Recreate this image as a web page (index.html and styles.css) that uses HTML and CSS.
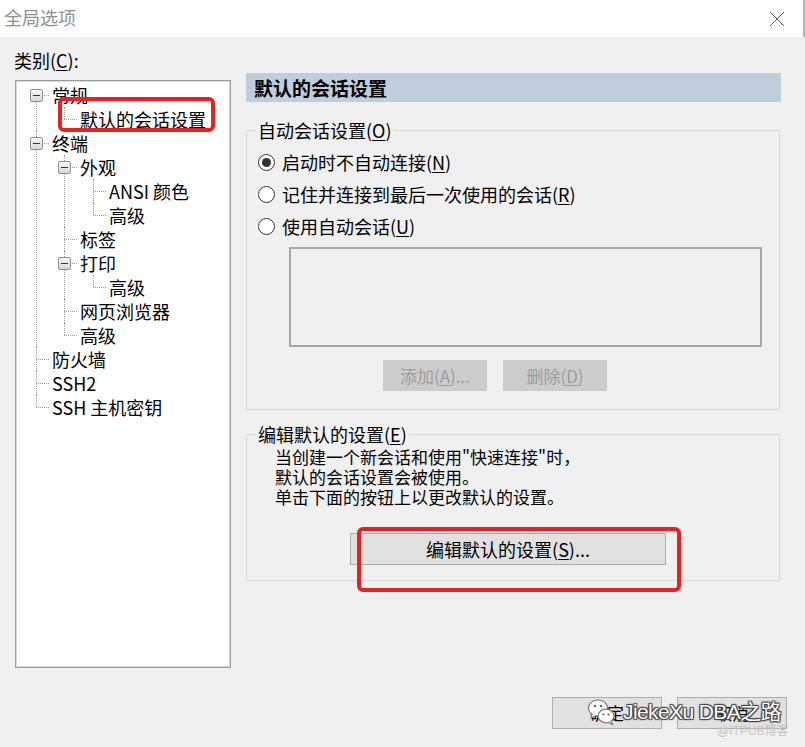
FILE: index.html
```html
<!DOCTYPE html>
<html lang="zh-CN">
<head>
<meta charset="utf-8">
<title>全局选项</title>
<link rel="stylesheet" href="styles.css">
</head>
<body>
<div class="window">
  <div class="titlebar">
    <span class="title">全局选项</span>
    <svg class="close" width="16" height="16" viewBox="0 0 16 16"><path d="M1 1 L15 15 M15 1 L1 15" stroke="#555" stroke-width="1" fill="none"/></svg>
  </div>
  <div class="content">
    <div class="left">
      <div class="cat-label">类别(<u>C</u>):</div>
      <div class="tree">
        <ul class="tree-root">
          <li><span class="exp"></span><div class="row">常规</div>
            <ul>
              <li><div class="row">默认的会话设置</div></li>
            </ul>
          </li>
          <li><span class="exp"></span><div class="row">终端</div>
            <ul>
              <li><span class="exp"></span><div class="row">外观</div>
                <ul>
                  <li><div class="row">ANSI 颜色</div></li>
                  <li><div class="row">高级</div></li>
                </ul>
              </li>
              <li><div class="row">标签</div></li>
              <li><span class="exp"></span><div class="row">打印</div>
                <ul>
                  <li><div class="row">高级</div></li>
                </ul>
              </li>
              <li><div class="row">网页浏览器</div></li>
              <li><div class="row">高级</div></li>
            </ul>
          </li>
          <li><div class="row">防火墙</div></li>
          <li><div class="row">SSH2</div></li>
          <li><div class="row">SSH 主机密钥</div></li>
        </ul>
        <span class="mark mark-tree"></span>
      </div>
    </div>
    <div class="right">
      <div class="header">默认的会话设置</div>
      <fieldset class="group group-auto">
        <legend>自动会话设置(<u>O</u>)</legend>
        <div class="radio-row"><span class="radio checked"></span><span>启动时不自动连接(<u>N</u>)</span></div>
        <div class="radio-row"><span class="radio"></span><span>记住并连接到最后一次使用的会话(<u>R</u>)</span></div>
        <div class="radio-row"><span class="radio"></span><span>使用自动会话(<u>U</u>)</span></div>
        <div class="listbox"></div>
        <div class="btn-row">
          <button class="btn disabled">添加(<u>A</u>)...</button>
          <button class="btn disabled">删除(<u>D</u>)</button>
        </div>
      </fieldset>
      <fieldset class="group group-edit">
        <legend>编辑默认的设置(<u>E</u>)</legend>
        <div class="desc">
          <div class="desc-line">当创建一个新会话和使用"快速连接"时，</div>
          <div class="desc-line">默认的会话设置会被使用。</div>
          <div class="desc-line">单击下面的按钮上以更改默认的设置。</div>
        </div>
        <button class="btn edit-btn">编辑默认的设置(<u>S</u>)...</button>
      </fieldset>
      <span class="mark mark-edit"></span>
    </div>
  </div>
  <div class="footer">
    <button class="btn footer-btn">确定</button>
    <button class="btn footer-btn">取消</button>
    <div class="watermark">
      <svg class="wm-icon" width="30" height="30" viewBox="0 0 30 30">
        <ellipse cx="11" cy="11" rx="9.5" ry="8" fill="#fff" stroke="#777" stroke-width="1.2"/>
        <path d="M5 17 L4 21 L9 18.5" fill="#fff" stroke="#777" stroke-width="1.2"/>
        <circle cx="8" cy="9" r="1.3" fill="#666"/>
        <circle cx="14" cy="9" r="1.3" fill="#666"/>
        <ellipse cx="19" cy="19" rx="8" ry="6.8" fill="#fff" stroke="#777" stroke-width="1.2"/>
        <path d="M24 24 L25.5 27.5 L21 25.3" fill="#fff" stroke="#777" stroke-width="1.2"/>
        <circle cx="16.5" cy="17.5" r="1.1" fill="#666"/>
        <circle cx="21.5" cy="17.5" r="1.1" fill="#666"/>
      </svg>
      <span class="wm-text">JiekeXu DBA之路</span>
      <span class="wm-sub">@ITPUB博客</span>
    </div>
  </div>
</div>
</body>
</html>
```

FILE: styles.css
```css
* { box-sizing: border-box; }
html, body { margin: 0; padding: 0; }
body {
  width: 805px;
  height: 747px;
  overflow: hidden;
  background: #f0f0f0;
  font-family: "Noto Sans CJK SC", "Noto Sans", sans-serif;
  font-size: 18px;
  color: #000;
}
u { text-decoration: underline; text-underline-offset: 2px; }

.window { width: 805px; height: 747px; display: flex; flex-direction: column; }

.titlebar {
  height: 37px;
  background: #fff;
  display: flex;
  align-items: center;
  justify-content: space-between;
  padding: 0 18px 3px 4px;
  border-right: 2px solid #b5b5b5;
}
.title { color: #8f8f8f; font-size: 18px; line-height: 24px; }
.close { display: block; margin-top: 3px; }

.content { display: flex; padding: 11px 0 0 14px; }

.left { width: 217px; }
.cat-label { line-height: 24px; height: 24px; font-size: 18px; }
.tree {
  position: relative;
  margin: 8px 0 0 1px;
  width: 216px;
  height: 588px;
  background: #fff;
  border: 1px solid #9c9c9c;
  box-shadow: inset 0 0 0 1px #d8d8d8;
  padding-top: 2px;
}
.tree ul { list-style: none; margin: 0; padding: 0; }
.tree ul ul { margin-left: -8px; }
.tree ul ul ul { margin-left: -7px; }
.tree li { position: relative; padding-left: 36px; }
.tree .row { height: 24px; line-height: 24px; font-size: 18px; white-space: nowrap; }
.tree li::before {
  content: "";
  position: absolute;
  left: 20px;
  top: 12px;
  width: 13px;
  border-top: 1px dotted #9a9a9a;
}
.tree li::after {
  content: "";
  position: absolute;
  left: 20px;
  top: 0;
  bottom: 0;
  border-left: 1px dotted #9a9a9a;
}
.tree-root > li:first-child::after { top: 12px; }
.tree li:last-child::after { bottom: auto; height: 12px; }
.tree .exp {
  position: absolute;
  left: 14px;
  top: 6px;
  width: 13px;
  height: 13px;
  border: 1px solid #8e8f8f;
  border-radius: 2px;
  background: linear-gradient(#f7f7f7, #d9d9d9);
  z-index: 1;
}
.tree .exp::after {
  content: "";
  position: absolute;
  left: 2px;
  right: 2px;
  top: 5px;
  height: 1px;
  background: #1e3287;
}

.mark {
  position: absolute;
  border: 4px solid #ea2020;
  border-radius: 6px;
  z-index: 2;
}
.mark-tree { left: 42px; top: 16px; width: 157px; height: 35px; }

.right { position: relative; width: 535px; margin-left: 15px; padding-top: 25px; }
.header {
  height: 29px;
  background: #bfcddc;
  font-weight: bold;
  font-size: 19px;
  line-height: 29px;
  padding-left: 8px;
}
.group {
  margin: 0 1px 0 0;
  padding: 0;
  border: 1px solid #d9d9d9;
  min-width: 0;
}
.group legend {
  margin-left: 9px;
  padding: 0 2px;
  font-size: 18px;
  line-height: 24px;
}
.group-auto { margin-top: 16px; padding-bottom: 18px; }
.radio-row {
  display: flex;
  align-items: center;
  height: 24px;
  margin: 8px 0 0 11px;
  gap: 7px;
  font-size: 18px;
  line-height: 24px;
}
.radio {
  width: 17px;
  height: 17px;
  border: 1px solid #333;
  border-radius: 50%;
  background: #fff;
  display: flex;
  align-items: center;
  justify-content: center;
  flex: none;
}
.radio.checked::after {
  content: "";
  width: 9px;
  height: 9px;
  border-radius: 50%;
  background: #333;
}
.listbox {
  margin: 9px 0 0 42px;
  width: 473px;
  height: 100px;
  border: 2px solid #a6a6a6;
  background: #f0f0f0;
}
.btn-row { display: flex; gap: 16px; margin: 13px 0 0 136px; }
.btn {
  font-family: inherit;
  font-size: 17px;
  line-height: 22px;
  padding: 0;
  color: #000;
  background: #e1e1e1;
  border: 1px solid #adadad;
}
.btn.disabled {
  width: 104px;
  height: 31px;
  background: #cccccc;
  border-color: #cccccc;
  color: #9d9d9d;
}
.group-edit { margin-top: 12px; padding-bottom: 15px; }
.desc {
  margin: 1px 0 0 28px;
  font-size: 17px;
}
.desc-line { height: 20px; line-height: 20px; white-space: nowrap; }
.edit-btn {
  display: block;
  margin: 26px 0 0 103px;
  width: 316px;
  height: 32px;
  font-size: 18px;
}
.mark-edit { left: 111px; top: 479px; width: 324px; height: 65px; }

.footer {
  position: relative;
  margin-top: 29px;
  display: flex;
  justify-content: flex-end;
  gap: 15px;
  padding-right: 18px;
}
.footer-btn { width: 110px; height: 32px; font-size: 17px; }
.watermark { position: absolute; left: 586px; top: 0; width: 219px; height: 50px; pointer-events: none; }
.wm-icon { position: absolute; left: 1px; top: 0; }
.wm-text {
  position: absolute;
  left: 37px;
  top: 1px;
  font-family: "Liberation Sans", "Noto Sans CJK SC", sans-serif;
  font-size: 21px;
  letter-spacing: -0.6px;
  line-height: 28px;
  color: #fff;
  white-space: nowrap;
  text-shadow: 0 0 1px #333, 1px 1px 1px #444, -1px -1px 1px #444, 1px -1px 1px #444, -1px 1px 1px #444;
}
.wm-sub {
  position: absolute;
  left: 131px;
  top: 27px;
  font-family: "Liberation Sans", "Noto Sans CJK SC", sans-serif;
  font-size: 12px;
  line-height: 14px;
  color: #c4c4c4;
  white-space: nowrap;
}
```
